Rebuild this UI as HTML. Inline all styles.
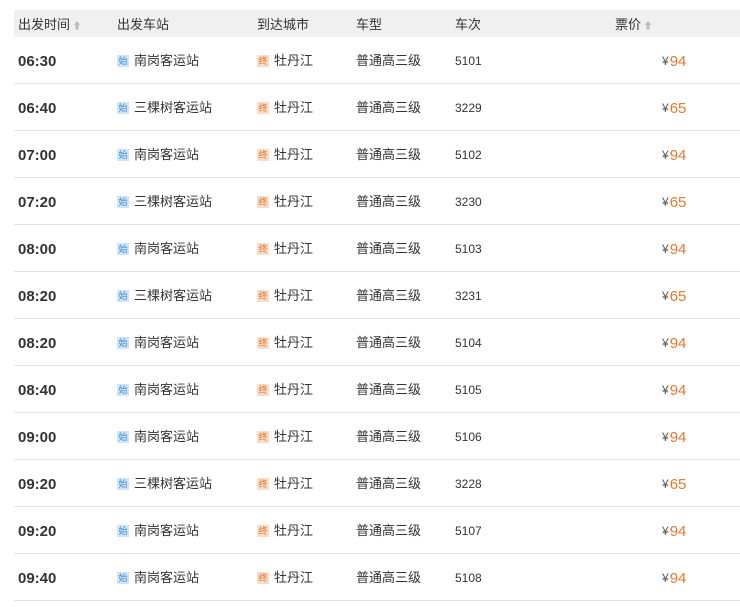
<!DOCTYPE html>
<html><head><meta charset="utf-8"><style>
body{margin:0;background:#fff;font-family:"Liberation Sans","Noto Sans CJK SC",sans-serif;font-size:13px;color:#333;width:740px;height:607px;overflow:hidden;position:relative}
.hd{position:absolute;left:14px;top:10px;width:726px;height:27px;background:#f0f0f0}
.row{position:absolute;left:14px;width:726px;height:46px;border-bottom:1px solid #e2e2e2}
.c{position:absolute;white-space:nowrap;line-height:16px;top:16px}
.t{font-weight:bold;font-size:15px;color:#333;top:17px;left:4px}
.ic{display:inline-block;width:12px;height:12px;font-size:9px;line-height:12px;text-align:center;vertical-align:top;margin-top:2px;margin-right:5px}
.s{background:#cfe4f7;color:#3d8fd8}
.e{background:#fadcc8;color:#e8782e}
.hd .c{top:7px}
.ar{color:#bbb;font-size:9px}
.p{left:648px;font-size:12px;color:#555}
.p b{font-weight:normal;color:#e8782e;font-size:15px;margin-left:1px;position:relative;top:1px}
</style></head><body>
<div class="hd">
<span class="c" style="left:4px">出发时间<span class="ar"> ⬆</span></span>
<span class="c" style="left:103px">出发车站</span>
<span class="c" style="left:243px">到达城市</span>
<span class="c" style="left:342px">车型</span>
<span class="c" style="left:441px">车次</span>
<span class="c" style="left:601px">票价<span class="ar"> ⬆</span></span>
</div>
<div id="rows"></div>
<script>
var d=[["06:30","南岗客运站","5101","94"],["06:40","三棵树客运站","3229","65"],["07:00","南岗客运站","5102","94"],["07:20","三棵树客运站","3230","65"],["08:00","南岗客运站","5103","94"],["08:20","三棵树客运站","3231","65"],["08:20","南岗客运站","5104","94"],["08:40","南岗客运站","5105","94"],["09:00","南岗客运站","5106","94"],["09:20","三棵树客运站","3228","65"],["09:20","南岗客运站","5107","94"],["09:40","南岗客运站","5108","94"]];
var h="";d.forEach(function(r,i){h+='<div class="row" style="top:'+(37+i*47)+'px"><span class="c t">'+r[0]+'</span><span class="c" style="left:103px"><span class="ic s">始</span>'+r[1]+'</span><span class="c" style="left:243px"><span class="ic e">终</span>牡丹江</span><span class="c" style="left:342px">普通高三级</span><span class="c" style="left:441px;font-size:12px">'+r[2]+'</span><span class="c p">¥<b>'+r[3]+'</b></span></div>'});
document.getElementById("rows").innerHTML=h;
</script>
</body></html>
